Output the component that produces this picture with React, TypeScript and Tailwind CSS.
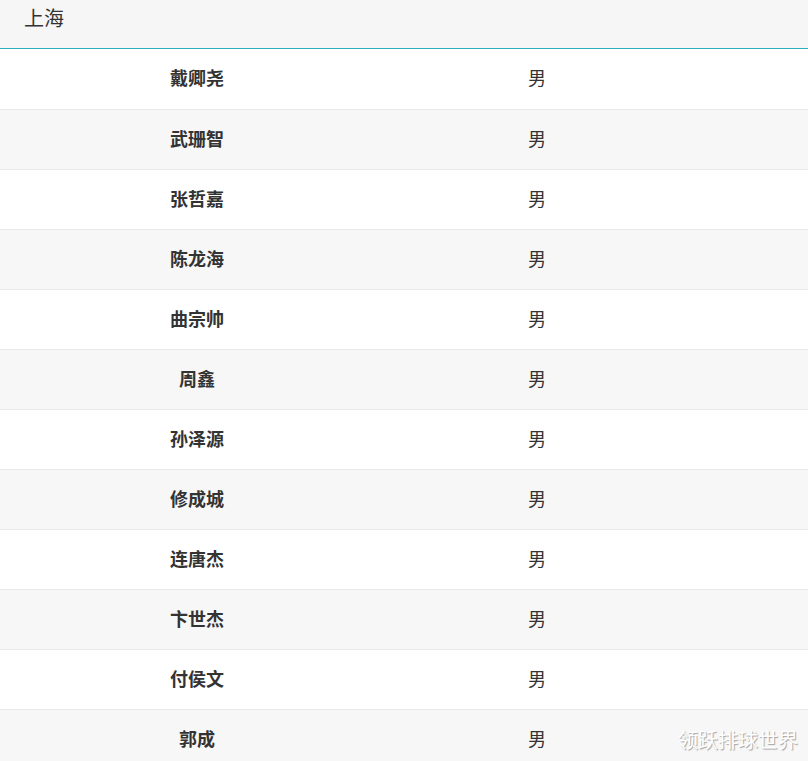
const players = [
  '戴卿尧',
  '武珊智',
  '张哲嘉',
  '陈龙海',
  '曲宗帅',
  '周鑫',
  '孙泽源',
  '修成城',
  '连唐杰',
  '卞世杰',
  '付侯文',
  '郭成',
];

export default function App() {
  return (
    <div
      className="relative h-[761px] w-[808px] overflow-hidden bg-white text-[#333]"
      style={{ fontFamily: '"Noto Sans CJK SC", "Noto Sans", sans-serif' }}
    >
      {/* team header */}
      <div className="h-[49px] bg-[#f6f6f6] border-b border-solid border-b-[#2aaebd] px-[24px] pt-[3px]">
        <span className="text-[20px] leading-[30px] text-[#333]">上海</span>
      </div>

      <div className="flex flex-col">
        {players.map((name, i) => (
          <div
            key={name}
            className={`grid grid-cols-[394px_286px_1fr] h-[60px] items-center pb-[4px] ${
              i > 0 ? 'border-t border-[#e9e9e9]' : ''
            } ${i % 2 === 1 ? 'bg-[#f7f7f7]' : 'bg-white'}`}
          >
            <div className="text-center text-[18px] font-bold leading-none">{name}</div>
            <div className="text-center text-[18px] leading-none">男</div>
            <div />
          </div>
        ))}
      </div>

      {/* watermark */}
      <div
        className="absolute right-[10px] bottom-[11px] text-[20px] leading-none text-white"
        style={{ textShadow: '1px 1px 1px rgba(0,0,0,0.35)' }}
      >
        领跃排球世界
      </div>
    </div>
  );
}
